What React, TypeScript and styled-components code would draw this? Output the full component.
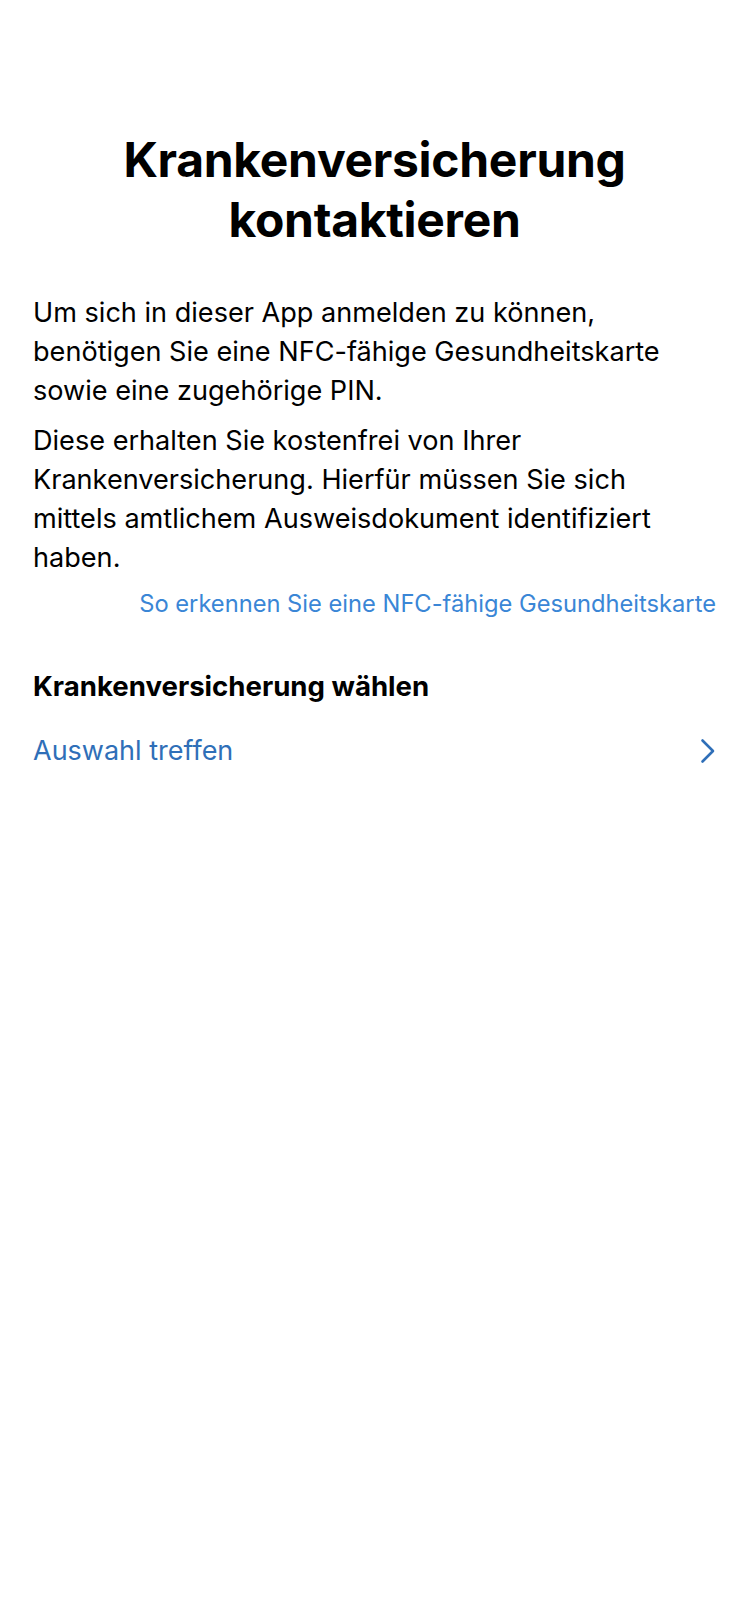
import styled, { createGlobalStyle } from "styled-components";

const GlobalStyle = createGlobalStyle`
  html, body {
    margin: 0;
    padding: 0;
    background: #ffffff;
  }
  body {
    font-family: Inter, "Noto Sans", "Liberation Sans", sans-serif;
    color: #000000;
    -webkit-font-smoothing: antialiased;
  }
`;

function ChevronRight() {
  return (
    <svg width="16" height="26" viewBox="0 0 16 26" fill="none">
      <path
        d="M2.5 2.5 L13 13 L2.5 23.5"
        stroke="#2f6fb8"
        strokeWidth="2.6"
        strokeLinecap="round"
        strokeLinejoin="round"
      />
    </svg>
  );
}

export default function App() {
  return (
    <Screen>
      <GlobalStyle />
      <Title>
        Krankenversicherung
        <br />
        kontaktieren
      </Title>

      <Body>
        <Paragraph>
          Um sich in dieser App anmelden zu können, benötigen Sie eine
          NFC-fähige Gesundheitskarte sowie eine zugehörige PIN.
        </Paragraph>
        <Paragraph>
          Diese erhalten Sie kostenfrei von Ihrer Krankenversicherung. Hierfür
          müssen Sie sich mittels amtlichem Ausweisdokument identifiziert
          haben.
        </Paragraph>
        <InfoLink>So erkennen Sie eine NFC-fähige Gesundheitskarte</InfoLink>
      </Body>

      <Section>
        <SectionTitle>Krankenversicherung wählen</SectionTitle>
        <SelectRow>
          <SelectLabel>Auswahl treffen</SelectLabel>
          <ChevronRight />
        </SelectRow>
      </Section>
    </Screen>
  );
}

const Screen = styled.div`
  width: 750px;
  min-height: 1624px;
  box-sizing: border-box;
  padding: 130px 34px 0 33px;
  background: #ffffff;
`;

const Title = styled.h1`
  margin: 0;
  font-size: 48px;
  line-height: 60px;
  font-weight: 700;
  text-align: center;
  letter-spacing: -0.3px;
`;

const Body = styled.div`
  margin-top: 43px;
  display: flex;
  flex-direction: column;
  gap: 11px;
`;

const Paragraph = styled.p`
  margin: 0;
  font-size: 27.1px;
  line-height: 39px;
  font-weight: 400;
`;

const InfoLink = styled.a`
  display: block;
  margin-top: 1px;
  text-align: right;
  font-size: 23.7px;
  line-height: 30px;
  color: #3a86d6;
`;

const Section = styled.div`
  margin-top: 49px;
  display: flex;
  flex-direction: column;
`;

const SectionTitle = styled.h2`
  margin: 0;
  font-size: 27.6px;
  line-height: 36px;
  font-weight: 700;
`;

const SelectRow = styled.div`
  margin-top: 27px;
  display: flex;
  align-items: center;
  justify-content: space-between;
  height: 40px;
`;

const SelectLabel = styled.span`
  font-size: 27px;
  line-height: 40px;
  color: #2f6fb8;
`;
